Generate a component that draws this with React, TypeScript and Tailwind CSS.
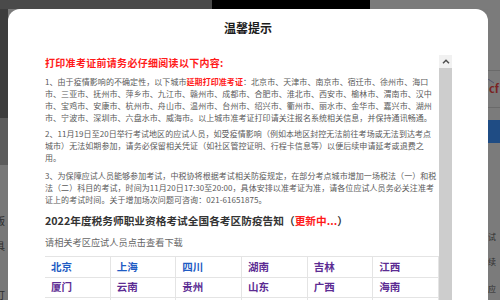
import React from "react";

const P = ({ lines }: { lines: React.ReactNode[] }) => (
  <div className="text-[8px] leading-[12px] text-[#5a5a5a] tracking-[0.06px]">
    {lines.map((l, i) => (
      <div key={i} className="whitespace-nowrap">
        {l}
      </div>
    ))}
  </div>
);

const rows1 = [
  ["北京", "b"],
  ["上海", "b"],
  ["四川", "b"],
  ["湖南", "p"],
  ["吉林", "p"],
  ["江西", "p"],
];
const rows2 = ["厦门", "云南", "贵州", "山东", "广西", "海南"];
const rows3 = ["", "", "", "", "", ""];

export default function App() {
  return (
    <div
      className="relative w-[500px] h-[300px] overflow-hidden bg-[#7a7a7a]"
      style={{ fontFamily: '"Noto Sans CJK SC", "Noto Sans", sans-serif' }}
    >
      {/* background page under overlay */}
      <div className="flex h-[9px]">
        <div className="w-[212px] bg-[#4a4a4a]" />
        <div className="w-[158px] bg-black" />
        <div className="flex-1 bg-[#7b7b7b]" />
      </div>
      <div className="flex h-[291px]">
        <div className="w-[8px] flex flex-col overflow-hidden">
          <div className="h-[109px] bg-[#3d3d3d] shrink-0" />
          <div className="h-[47px] bg-[#5c5c5c] shrink-0" />
          <div className="flex-1 bg-[#787878] relative">
            <div className="absolute left-[-5px] top-[50px] text-[10px] leading-[12px] text-[#2e2e2e]">版</div>
            <div className="absolute left-[-5px] top-[75px] text-[10px] leading-[12px] text-[#2e2e2e]">具</div>
            <div className="absolute left-[-5px] top-[124px] text-[10px] leading-[12px] text-[#2e2e2e]">打</div>
          </div>
        </div>
        <div className="flex-1" />
        <div className="w-[12px] relative bg-[#7b7b7b]">
          <div className="absolute left-0 right-0 top-[61px] h-px bg-[#6a6a6a]" />
          <svg className="absolute left-0 top-[70px]" width="12" height="10">
            <line x1="0" y1="0" x2="6" y2="4" stroke="#4a4a6a" strokeWidth="0.8" />
          </svg>
          <div className="absolute left-[1px] top-[73px] text-[11px] leading-[12px] font-bold text-[#7a2323]">cf</div>
          <div className="absolute left-0 right-0 top-[98px] h-px bg-[#6a6a6a]" />
          <div className="absolute left-0 right-0 top-[111px] h-[23px] bg-[#1f4c84]" />
          <div className="absolute left-0 top-[223px] text-[8px] leading-[10px] text-[#2e2e2e]">试</div>
          <div className="absolute left-0 top-[248px] text-[8px] leading-[10px] text-[#2e2e2e]">续</div>
          <div className="absolute left-0 top-[275px] text-[8px] leading-[10px] text-[#2e2e2e]">应</div>
        </div>
      </div>

      {/* modal */}
      <div className="absolute left-[8px] top-[9px] w-[480px] h-[320px] bg-white rounded-[12px] flex flex-col">
        <div className="h-[46px] pt-[12px] text-center text-[12px] leading-[14px] font-bold text-[#1a1a1a] shrink-0">
          温馨提示
        </div>
        <div className="flex flex-1 pl-[37px] pr-[36px] min-h-0">
          <div className="w-[394px] overflow-hidden">
            <div className="mt-[1px] text-[10px] leading-[14px] font-bold text-[#ff1a1a] tracking-[0.3px]">
              打印准考证前请务必仔细阅读以下内容:
            </div>
            <div className="mt-[6px]">
              <P
                lines={[
                  <>
                    1、由于疫情影响的不确定性，以下城市
                    <span className="font-bold text-[#ff1a1a]">延期打印准考证</span>
                    ：北京市、天津市、南京市、宿迁市、徐州市、海口
                  </>,
                  "市、三亚市、抚州市、萍乡市、九江市、赣州市、成都市、合肥市、淮北市、西安市、榆林市、渭南市、汉中",
                  "市、宝鸡市、安康市、杭州市、舟山市、温州市、台州市、绍兴市、衢州市、丽水市、金华市、嘉兴市、湖州",
                  "市、宁波市、深圳市、六盘水市、威海市。以上城市准考证打印请关注报名系统相关信息，并保持通讯畅通。",
                ]}
              />
            </div>
            <div className="mt-[4px]">
              <P
                lines={[
                  "2、11月19日至20日举行考试地区的应试人员，如受疫情影响（例如本地区封控无法前往考场或无法到达考点",
                  "城市）无法如期参加，请务必保留相关凭证（如社区管控证明、行程卡信息等）以便后续申请延考或退费之",
                  "用。",
                ]}
              />
            </div>
            <div className="mt-[6px]">
              <P
                lines={[
                  "3、为保障应试人员能够参加考试，中税协将根据考试相关防疫规定，在部分考点城市增加一场税法（一）和税",
                  "法（二）科目的考试，时间为11月20日17:30至20:00，具体安排以准考证为准，请各位应试人员务必关注准考",
                  "证上的考试时间。关于增加场次问题可咨询：021-61651875。",
                ]}
              />
            </div>
            <div className="mt-[8px] text-[10.7px] leading-[14px] font-semibold text-[#333333] whitespace-nowrap">
              2022年度税务师职业资格考试全国各考区防疫告知（
              <span className="font-bold text-[#ff1a1a]">更新中...</span>）
            </div>
            <div className="mt-[8px] text-[9.2px] leading-[12px] text-[#666666]">
              请相关考区应试人员点击查看下载
            </div>
            <div className="mt-[8px] -ml-px grid grid-cols-6 border-t border-l border-[#e4e4e4]">
              {rows1.map(([t, c]) => (
                <div
                  key={t}
                  className={`h-[20.5px] border-r border-b border-[#e4e4e4] pl-[6px] flex items-center text-[10.5px] font-bold ${
                    c === "b" ? "text-[#1f5cc4]" : "text-[#5c2c93]"
                  }`}
                >
                  {t}
                </div>
              ))}
              {rows2.map((t) => (
                <div
                  key={t}
                  className="h-[20.5px] border-r border-b border-[#e4e4e4] pl-[6px] flex items-center text-[10.5px] font-bold text-[#5c2c93]"
                >
                  {t}
                </div>
              ))}
              {rows3.map((t, i) => (
                <div key={i} className="h-[20.5px] border-r border-b border-[#e4e4e4]" />
              ))}
            </div>
          </div>
          {/* scrollbar */}
          <div className="w-[13px] flex flex-col shrink-0">
            <div className="h-[13px] bg-[#f1f1f1] flex items-center justify-center">
              <svg width="8" height="5" viewBox="0 0 8 5">
                <path d="M1 4.2 L4 1.2 L7 4.2" fill="none" stroke="#505050" strokeWidth="1.5" />
              </svg>
            </div>
            <div className="flex-1 bg-[#cdcdcd]" />
          </div>
        </div>
      </div>
    </div>
  );
}
